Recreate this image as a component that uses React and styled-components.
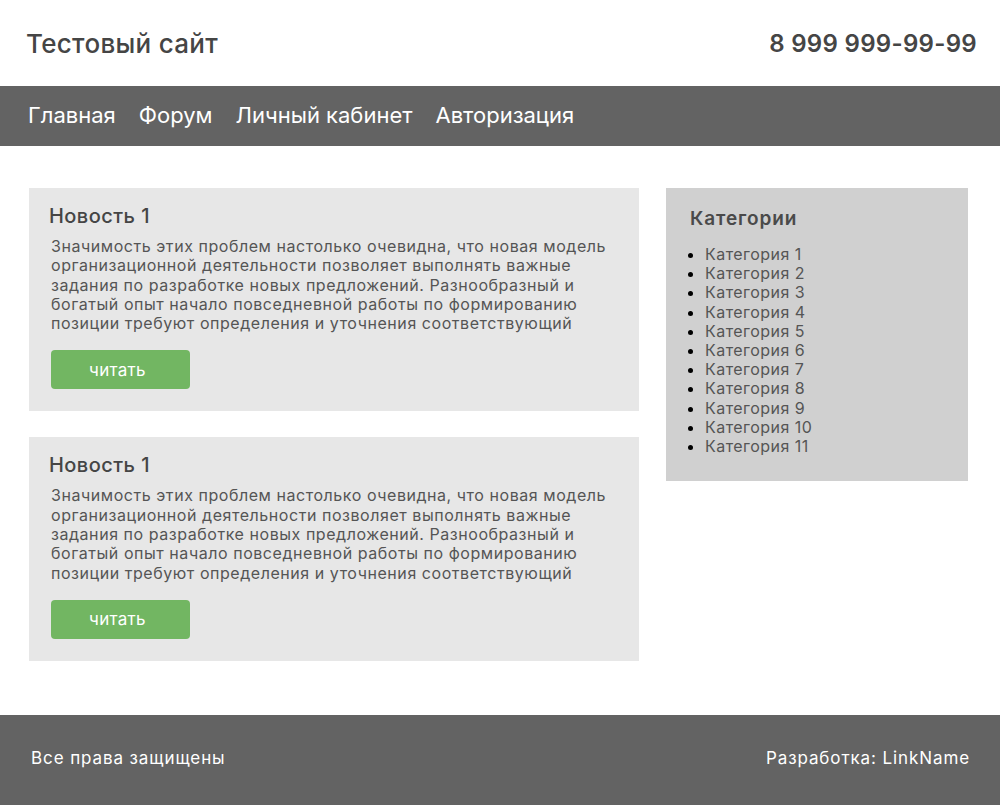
import styled, { createGlobalStyle } from "styled-components";

const GlobalStyle = createGlobalStyle`
  * {
    box-sizing: border-box;
  }
  body {
    margin: 0;
    background: #fff;
    font-family: Inter, "Open Sans", sans-serif;
    color: #4a4a4a;
  }
  h1, h2, h3, p, ul {
    margin: 0;
  }
`;

const news = [
  {
    title: "Новость 1",
    text: "Значимость этих проблем настолько очевидна, что новая модель организационной деятельности позволяет выполнять важные задания по разработке новых предложений. Разнообразный и богатый опыт начало повседневной работы по формированию позиции требуют определения и уточнения соответствующий",
  },
  {
    title: "Новость 1",
    text: "Значимость этих проблем настолько очевидна, что новая модель организационной деятельности позволяет выполнять важные задания по разработке новых предложений. Разнообразный и богатый опыт начало повседневной работы по формированию позиции требуют определения и уточнения соответствующий",
  },
];

const categories = Array.from({ length: 11 }, (_, i) => `Категория ${i + 1}`);

const menu = ["Главная", "Форум", "Личный кабинет", "Авторизация"];

export default function App() {
  return (
    <Page>
      <GlobalStyle />
      <Header>
        <Logo>Тестовый сайт</Logo>
        <Phone>8 999 999-99-99</Phone>
      </Header>
      <Nav>
        {menu.map((item) => (
          <NavLink key={item}>{item}</NavLink>
        ))}
      </Nav>
      <Main>
        <NewsList>
          {news.map((obj, i) => (
            <NewsCard key={i}>
              <NewsTitle>{obj.title}</NewsTitle>
              <NewsText>{obj.text}</NewsText>
              <ReadButton>читать</ReadButton>
            </NewsCard>
          ))}
        </NewsList>
        <Sidebar>
          <SidebarTitle>Категории</SidebarTitle>
          <CategoryList>
            {categories.map((c) => (
              <li key={c}>{c}</li>
            ))}
          </CategoryList>
        </Sidebar>
      </Main>
      <Footer>
        <p>Все права защищены</p>
        <p>Разработка: LinkName</p>
      </Footer>
    </Page>
  );
}

const Page = styled.div`
  width: 1000px;
  min-height: 805px;
  display: flex;
  flex-direction: column;
`;

const Header = styled.header`
  height: 86px;
  display: flex;
  align-items: center;
  justify-content: space-between;
  padding: 0 23px 0 26px;
`;

const Logo = styled.h1`
  font-size: 26px;
  font-weight: 500;
  letter-spacing: 0.3px;
  color: #454545;
`;

const Phone = styled.div`
  font-size: 24px;
  font-weight: 600;
  letter-spacing: 0.3px;
  color: #454545;
`;

const Nav = styled.nav`
  height: 60px;
  background: #636363;
  display: flex;
  align-items: center;
  gap: 23px;
  padding: 0 28px 2px;
`;

const NavLink = styled.a`
  color: #fff;
  font-size: 22px;
  cursor: pointer;
`;

const Main = styled.main`
  flex: 1;
  display: flex;
  align-items: flex-start;
  gap: 27px;
  padding: 42px 32px 54px 29px;
`;

const NewsList = styled.div`
  width: 610px;
  display: flex;
  flex-direction: column;
  gap: 26px;
`;

const NewsCard = styled.article`
  background: #e7e7e7;
  padding: 16px 20px 22px 20px;
`;

const NewsTitle = styled.h2`
  font-size: 20px;
  font-weight: 500;
  letter-spacing: 0.45px;
  color: #454545;
  line-height: 24px;
`;

const NewsText = styled.p`
  margin-top: 9px;
  padding-left: 2px;
  font-size: 16px;
  letter-spacing: 0.55px;
  line-height: 19.3px;
  color: #555;
`;

const ReadButton = styled.button`
  margin: 17px 0 0 2px;
  width: 139px;
  height: 39px;
  border: none;
  border-radius: 4px;
  background: #72b662;
  color: #fff;
  font-family: inherit;
  font-size: 17px;
  letter-spacing: 0.3px;
  padding: 0 6px 0 0;
  cursor: pointer;
`;

const Sidebar = styled.aside`
  width: 302px;
  background: #d0d0d0;
  padding: 19px 24px 25px 24px;
`;

const SidebarTitle = styled.h3`
  font-size: 19px;
  font-weight: 600;
  letter-spacing: 0.9px;
  color: #4a4a4a;
`;

const CategoryList = styled.ul`
  margin-top: 15px;
  padding-left: 15px;
  font-size: 16px;
  letter-spacing: 0.45px;
  line-height: 19.2px;
  color: #555;
  li::marker {
    color: #000;
  }
`;

const Footer = styled.footer`
  height: 90px;
  background: #636363;
  display: flex;
  align-items: center;
  justify-content: space-between;
  padding: 0 30px 4px 31px;
  color: #fff;
  font-size: 17px;
  letter-spacing: 0.9px;
`;
